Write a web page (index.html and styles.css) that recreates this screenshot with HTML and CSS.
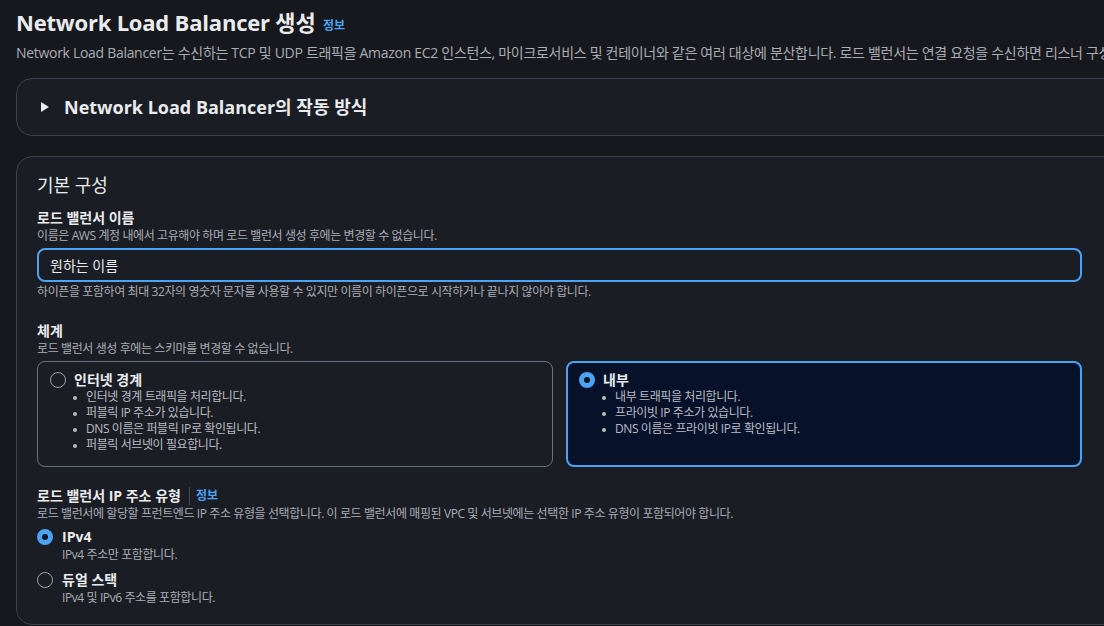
FILE: index.html
```html
<!DOCTYPE html>
<html lang="ko">
<head>
    <meta charset="UTF-8">
    <meta name="viewport" content="width=device-width, initial-scale=1.0">
    <title>Network Load Balancer 생성</title>
    <link rel="stylesheet" href="styles.css">
</head>
<body>
    <div class="page">
        <header class="pageHead">
            <h1 class="title">Network Load Balancer 생성 <a class="info">정보</a></h1>
            <p class="lead">Network Load Balancer는 수신하는 TCP 및 UDP 트래픽을 Amazon EC2 인스턴스, 마이크로서비스 및 컨테이너와 같은 여러 대상에 분산합니다. 로드 밸런서는 연결 요청을 수신하면 리스너 구성에 따라 대상을 선택합니다.</p>
        </header>

        <section class="card expander">
            <svg class="caret" width="10" height="12" viewBox="0 0 10 12"><path d="M1 1 L9 6 L1 11 Z" fill="#e9ebed"/></svg>
            <h2 class="expanderTitle">Network Load Balancer의 작동 방식</h2>
        </section>

        <section class="card config">
            <div class="cardBody">
                <h2 class="sectionTitle">기본 구성</h2>

                <div class="field">
                    <div class="label">로드 밸런서 이름</div>
                    <div class="desc">이름은 AWS 계정 내에서 고유해야 하며 로드 밸런서 생성 후에는 변경할 수 없습니다.</div>
                    <input class="textInput" type="text" value="원하는 이름">
                    <div class="constraint">하이픈을 포함하여 최대 32자의 영숫자 문자를 사용할 수 있지만 이름이 하이픈으로 시작하거나 끝나지 않아야 합니다.</div>
                </div>

                <div class="field scheme">
                    <div class="label">체계</div>
                    <div class="desc">로드 밸런서 생성 후에는 스키마를 변경할 수 없습니다.</div>
                    <div class="tiles">
                        <div class="tile">
                            <div class="tileHead"><span class="radio"></span><span class="tileLabel">인터넷 경계</span></div>
                            <ul class="bullets">
                                <li>인터넷 경계 트래픽을 처리합니다.</li>
                                <li>퍼블릭 IP 주소가 있습니다.</li>
                                <li>DNS 이름은 퍼블릭 IP로 확인됩니다.</li>
                                <li>퍼블릭 서브넷이 필요합니다.</li>
                            </ul>
                        </div>
                        <div class="tile selected">
                            <div class="tileHead"><span class="radio checked"></span><span class="tileLabel">내부</span></div>
                            <ul class="bullets">
                                <li>내부 트래픽을 처리합니다.</li>
                                <li>프라이빗 IP 주소가 있습니다.</li>
                                <li>DNS 이름은 프라이빗 IP로 확인됩니다.</li>
                            </ul>
                        </div>
                    </div>
                </div>

                <div class="field ipType">
                    <div class="label">로드 밸런서 IP 주소 유형 <span class="divider"></span> <a class="info">정보</a></div>
                    <div class="desc">로드 밸런서에 할당할 프런트엔드 IP 주소 유형을 선택합니다. 이 로드 밸런서에 매핑된 VPC 및 서브넷에는 선택한 IP 주소 유형이 포함되어야 합니다.</div>
                    <div class="option">
                        <span class="radio checked"></span>
                        <div>
                            <div class="optionLabel">IPv4</div>
                            <div class="desc">IPv4 주소만 포함합니다.</div>
                        </div>
                    </div>
                    <div class="option">
                        <span class="radio"></span>
                        <div>
                            <div class="optionLabel">듀얼 스택</div>
                            <div class="desc">IPv4 및 IPv6 주소를 포함합니다.</div>
                        </div>
                    </div>
                </div>
            </div>
        </section>
    </div>
</body>
</html>
```

FILE: styles.css
```css
html, body {
    margin: 0;
    background-color: #16181d;
    overflow: hidden;
}

body {
    font-family: "Open Sans", "Noto Sans CJK KR", sans-serif;
    color: #e9ebed;
    font-size: 14px;
}

.page {
    width: 1300px;
    padding: 7px 0 0 16px;
}

.title {
    margin: 0;
    font-size: 22px;
    line-height: 30px;
    font-weight: 700;
    letter-spacing: -0.2px;
    white-space: nowrap;
}

.info {
    color: #4ba3f5;
    font-size: 12px;
    font-weight: 700;
    letter-spacing: 0;
    margin-left: 2px;
    vertical-align: 1px;
}

.lead {
    margin: 2px 0 0;
    font-size: 14px;
    line-height: 20px;
    color: #a9adb4;
    letter-spacing: -0.3px;
    white-space: nowrap;
}

.card {
    width: 1110px;
    background-color: #1b1d24;
    border: 1px solid #3d4048;
    border-radius: 16px;
    box-sizing: border-box;
}

.expander {
    margin-top: 15px;
    height: 58px;
    display: flex;
    align-items: center;
    padding-left: 23px;
}

.caret {
    margin-right: 14px;
}

.expanderTitle {
    margin: 0;
    font-size: 18px;
    line-height: 22px;
    font-weight: 700;
}

.config {
    margin-top: 20px;
    padding: 16px 20px 18px;
}

.cardBody {
    width: 1045px;
}

.sectionTitle {
    margin: 0;
    font-size: 18px;
    line-height: 24px;
    font-weight: 400;
}

.field {
    margin-top: 11px;
}

.label {
    font-weight: 700;
    line-height: 20px;
    display: flex;
    align-items: center;
    white-space: nowrap;
}

.desc {
    font-size: 12px;
    line-height: 16px;
    color: #a9adb4;
    letter-spacing: -0.4px;
    white-space: nowrap;
}

.textInput {
    display: block;
    width: 100%;
    box-sizing: border-box;
    height: 34px;
    margin-top: 4px;
    padding: 0 11px;
    border: 2px solid #4ba3f5;
    border-radius: 8px;
    background-color: #1b1d24;
    color: #e9ebed;
    font-family: inherit;
    font-size: 14px;
    outline: none;
}

.constraint {
    margin-top: 2px;
    font-size: 12px;
    line-height: 16px;
    color: #a9adb4;
    letter-spacing: -0.4px;
}

.scheme {
    margin-top: 21px;
}

.tiles {
    display: grid;
    grid-template-columns: 1fr 1fr;
    gap: 13px;
    margin-top: 4px;
}

.tile {
    border: 1px solid #6b717c;
    border-radius: 8px;
    padding: 9px 12px 12px;
    height: 106px;
    box-sizing: border-box;
}

.tile.selected {
    border: 2px solid #4ba3f5;
    background-color: #08112a;
    padding: 8px 11px 11px;
}

.tileHead {
    display: flex;
    align-items: center;
    height: 18px;
}

.tileLabel {
    font-weight: 700;
    line-height: 18px;
    margin-left: 8px;
}

.radio {
    display: inline-block;
    width: 16px;
    height: 16px;
    box-sizing: border-box;
    border: 1.5px solid #9aa0a8;
    border-radius: 50%;
    flex: none;
}

.radio.checked {
    border: 5px solid #4ba3f5;
    background-color: #0f141d;
}

.bullets {
    list-style: none;
    margin: 0;
    padding: 0 0 0 23px;
}

.bullets li {
    position: relative;
    font-size: 12px;
    line-height: 16px;
    color: #b8bcc2;
    letter-spacing: -0.4px;
    padding-left: 13px;
}

.bullets li::before {
    content: "";
    position: absolute;
    left: 0;
    top: 7px;
    width: 4px;
    height: 4px;
    border-radius: 50%;
    background-color: #b8bcc2;
}

.ipType {
    margin-top: 19px;
}

.divider {
    display: inline-block;
    width: 1px;
    height: 18px;
    background-color: #474b53;
    margin: 0 6px 0 8px;
}

.ipType .info {
    margin-left: 0;
    vertical-align: 0;
}

.option {
    display: flex;
    align-items: flex-start;
    margin-top: 5px;
}

.option + .option {
    margin-top: 7px;
}

.option .radio {
    margin-top: 2px;
    margin-right: 9px;
}

.optionLabel {
    font-weight: 700;
    line-height: 20px;
}
```
